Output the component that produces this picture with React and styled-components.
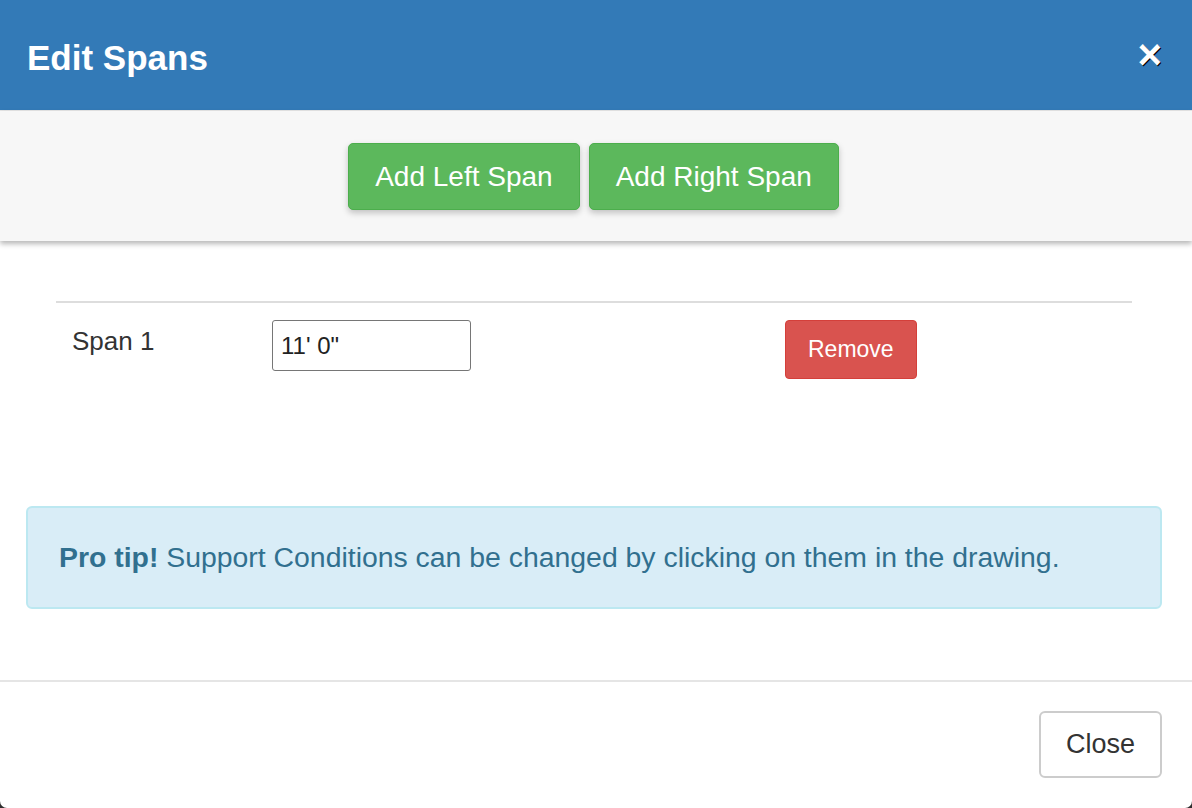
import React from "react";
import styled, { createGlobalStyle } from "styled-components";

const GlobalStyle = createGlobalStyle`
  html, body {
    margin: 0;
    padding: 0;
    background: #2e2e2e;
  }
  * {
    box-sizing: border-box;
  }
`;

const Modal = styled.div`
  width: 1192px;
  height: 808px;
  background: #fff;
  border-radius: 0 0 7px 7px;
  overflow: hidden;
  display: flex;
  flex-direction: column;
  font-family: "Liberation Sans", Arial, sans-serif;
  color: #333;
`;

const Header = styled.header`
  height: 111px;
  flex: none;
  background: #337ab7;
  border-bottom: 1px solid #e5e5e5;
  display: flex;
  align-items: center;
  justify-content: space-between;
  padding: 0 30px 0 27px;
`;

const Title = styled.h4`
  margin: 0;
  color: #fff;
  font-size: 35px;
  font-weight: bold;
  line-height: 1;
  padding-top: 4px;
`;

const CloseX = styled.button`
  background: transparent;
  border: none;
  padding: 0;
  color: #fff;
  font-family: "Liberation Sans", Arial, sans-serif;
  font-size: 42px;
  font-weight: bold;
  line-height: 1;
  text-shadow: 1px 1px 0 #000;
  cursor: pointer;
`;

const Toolbar = styled.div`
  height: 130px;
  flex: none;
  background: #f7f7f7;
  box-shadow: 0 3px 5px rgba(0, 0, 0, 0.28);
  display: flex;
  justify-content: center;
  align-items: flex-start;
  gap: 9px;
  padding: 32px 5px 0 0;
  position: relative;
  z-index: 1;
`;

const Btn = styled.button`
  font-family: "Liberation Sans", Arial, sans-serif;
  border-radius: ${(p) => p.$radius || 5}px;
  border: 1px solid;
  cursor: pointer;
  line-height: 1;
`;

const GreenBtn = styled(Btn)`
  height: 67px;
  padding: 0 26px;
  font-size: 28px;
  color: #fff;
  background: #5cb85c;
  border-color: #4cae4c;
  box-shadow: 0 3px 6px rgba(0, 0, 0, 0.22);
`;

const Body = styled.div`
  padding: 60px 30px 71px 26px;
`;

const Table = styled.div`
  margin: 0 30px;
  border-top: 2px solid #dddddd;
  display: grid;
  grid-template-columns: 200px 513px 1fr;
  align-items: start;
`;

const Cell = styled.div`
  padding: 17px 16px 0;
`;

const SpanLabel = styled.div`
  font-size: 26px;
  line-height: 42px;
`;

const SpanInput = styled.input`
  width: 199px;
  height: 51px;
  border: 1px solid #767676;
  border-radius: 3px;
  padding: 0 8px;
  font-family: "Liberation Sans", Arial, sans-serif;
  font-size: 24px;
  color: #222;
  outline: none;
`;

const RedBtn = styled(Btn)`
  height: 59px;
  padding: 0 22px;
  font-size: 23px;
  color: #fff;
  background: #d9534f;
  border-color: #d43f3a;
`;

const Alert = styled.div`
  margin-top: 127px;
  height: 103px;
  background: #d9edf7;
  border: 2px solid #bce8f1;
  border-radius: 6px;
  color: #31708f;
  font-size: 28.4px;
  display: flex;
  align-items: center;
  padding: 0 0 1px 31px;

  strong {
    font-weight: bold;
  }
`;

const Footer = styled.footer`
  border-top: 2px solid #e5e5e5;
  padding: 29px 30px 30px;
  display: flex;
  justify-content: flex-end;
`;

const DefaultBtn = styled(Btn)`
  height: 67px;
  padding: 0 25px;
  font-size: 27px;
  color: #333;
  background: #fff;
  border: 2px solid #cccccc;
`;

const App = () => (
  <>
    <GlobalStyle />
    <Modal>
      <Header>
        <Title>Edit Spans</Title>
        <CloseX aria-label="Close">×</CloseX>
      </Header>
      <Toolbar>
        <GreenBtn>Add Left Span</GreenBtn>
        <GreenBtn>Add Right Span</GreenBtn>
      </Toolbar>
      <Body>
        <Table>
          <Cell>
            <SpanLabel>Span 1</SpanLabel>
          </Cell>
          <Cell>
            <SpanInput defaultValue={`11' 0"`} />
          </Cell>
          <Cell>
            <RedBtn $radius={4}>Remove</RedBtn>
          </Cell>
        </Table>
        <Alert>
          <span>
            <strong>Pro tip!</strong> Support Conditions can be changed by
            clicking on them in the drawing.
          </span>
        </Alert>
      </Body>
      <Footer>
        <DefaultBtn $radius={6}>Close</DefaultBtn>
      </Footer>
    </Modal>
  </>
);

export default App;
